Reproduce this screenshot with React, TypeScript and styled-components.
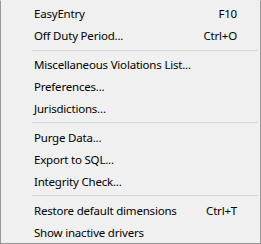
import React from 'react';
import styled, { createGlobalStyle } from 'styled-components';

const GlobalStyle = createGlobalStyle`
  html, body {
    margin: 0;
    padding: 0;
    background: #ffffff;
  }
`;

const Menu = styled.div`
  width: 261px;
  height: 244px;
  box-sizing: border-box;
  background: #f0f0f0;
  border: 1px solid #979797;
  border-top-color: #f0f0f0;
  padding: 2px 2px 0 2px;
  display: flex;
  flex-direction: column;
  font-family: "Noto Sans", "Open Sans", sans-serif;
  font-size: 11.5px;
  letter-spacing: -0.2px;
  color: #000000;
`;

const Item = styled.div`
  height: 22px;
  display: flex;
  align-items: center;
  padding: 0 21px 0 31px;
`;

const Label = styled.span`
  flex: 1;
  white-space: nowrap;
`;

const Shortcut = styled.span`
  white-space: nowrap;
`;

const Separator = styled.div`
  height: 7px;
  display: flex;
  align-items: center;
  padding-left: 29px;

  &::after {
    content: "";
    flex: 1;
    height: 1px;
    background: #d7d7d7;
  }
`;

type Entry = { label: string; shortcut?: string } | 'sep';

const entries: Entry[] = [
  { label: 'EasyEntry', shortcut: 'F10' },
  { label: 'Off Duty Period...', shortcut: 'Ctrl+O' },
  'sep',
  { label: 'Miscellaneous Violations List...' },
  { label: 'Preferences...' },
  { label: 'Jurisdictions...' },
  'sep',
  { label: 'Purge Data...' },
  { label: 'Export to SQL...' },
  { label: 'Integrity Check...' },
  'sep',
  { label: 'Restore default dimensions', shortcut: 'Ctrl+T' },
  { label: 'Show inactive drivers' },
];

export default function App() {
  return (
    <>
      <GlobalStyle />
      <Menu>
        {entries.map((e, i) =>
          e === 'sep' ? (
            <Separator key={i} />
          ) : (
            <Item key={i}>
              <Label>{e.label}</Label>
              {e.shortcut && <Shortcut>{e.shortcut}</Shortcut>}
            </Item>
          )
        )}
      </Menu>
    </>
  );
}
